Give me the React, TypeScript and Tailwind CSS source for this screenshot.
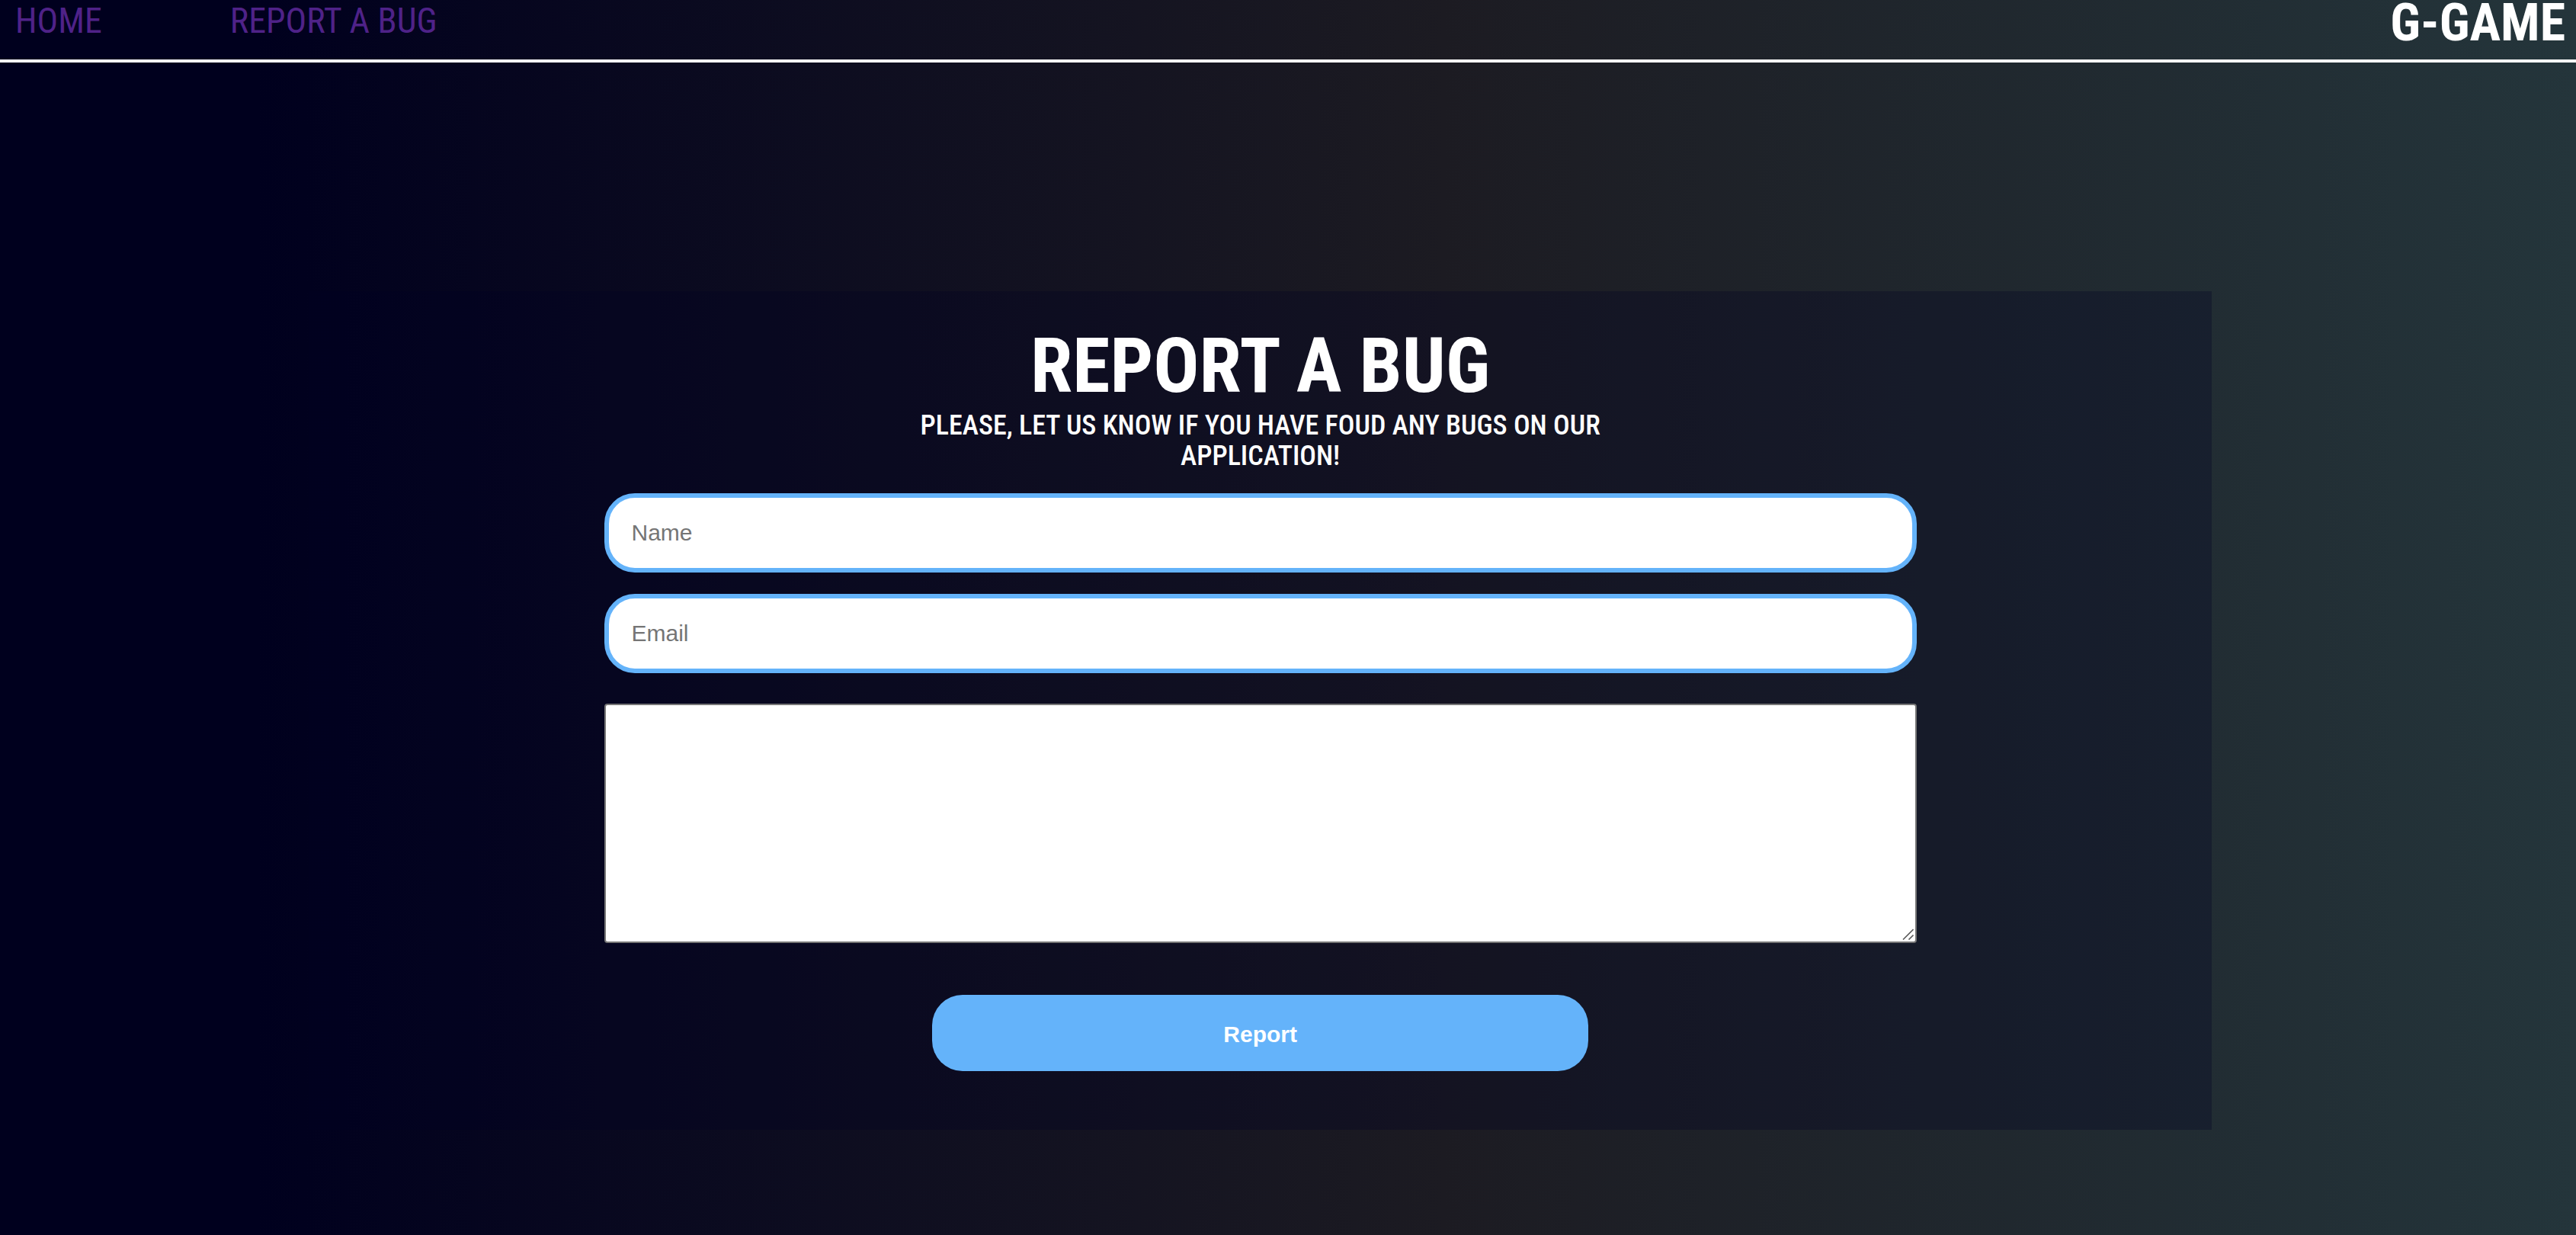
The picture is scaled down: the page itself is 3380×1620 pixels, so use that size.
const display = "font-['Roboto_Condensed','Roboto','Liberation_Sans',sans-serif]";

const fieldClass =
  "h-[104px] w-full rounded-[40px] border-6 border-[#64b3fa] bg-white px-[30px] text-[30px] text-black placeholder:text-[#757575] focus:outline-none";

function Header() {
  return (
    <header className={`${display} flex h-[82px] items-start justify-between border-b-4 border-white pl-5 pr-3.5`}>
      <nav className="flex gap-[168px] text-[46px] leading-[54px] text-[#4f2288]">
        <a href="#home">HOME</a>
        <a href="#report">REPORT A BUG</a>
      </nav>
      <span className="text-[68px] font-bold leading-[60px] text-white">G-GAME</span>
    </header>
  );
}

function ReportForm() {
  return (
    <form
      id="report"
      className="ml-[12%] mt-[300px] flex w-[73.85%] flex-col items-center bg-[#000022]/30 pb-[77px] pt-12"
      onSubmit={(e) => e.preventDefault()}
    >
      <div className={`${display} flex w-full flex-col items-center text-center text-white`}>
        <h1 className="text-[100px] font-bold leading-[100px]">REPORT A BUG</h1>
        <p className="mt-2 w-[40%] text-[36px] font-medium leading-[40px]">
          PLEASE, LET US KNOW IF YOU HAVE FOUD ANY BUGS ON OUR APPLICATION!
        </p>
      </div>

      <div className="mt-[29px] flex w-[69%] flex-col items-center">
        <input className={fieldClass} type="text" name="name" placeholder="Name" aria-label="Name" />
        <input className={`${fieldClass} mt-7`} type="email" name="email" placeholder="Email" aria-label="Email" />
        <div className="relative mt-10 flex w-full">
          <textarea
            className="h-[314px] w-full resize-y rounded-[4px] border-2 border-[#767676] bg-white p-1 text-[26px] text-black focus:outline-none [&::-webkit-resizer]:bg-transparent"
            name="message"
            aria-label="Bug description"
          />
          <svg
            className="pointer-events-none absolute bottom-1 right-1 h-4 w-4"
            viewBox="0 0 16 16"
            fill="none"
            stroke="#5c5c5c"
            strokeWidth="1.6"
            aria-hidden="true"
          >
            <path d="M2 15.5 15.5 2M9.5 15.5l6-6" />
          </svg>
        </div>
        <button
          type="submit"
          className="mt-[68px] h-[100px] w-1/2 cursor-pointer rounded-[40px] bg-[#64b3fa] pt-0.5 text-[30px] font-bold text-white"
        >
          Report
        </button>
      </div>
    </form>
  );
}

export default function App() {
  return (
    <div className="min-h-screen bg-[linear-gradient(90deg,#00001e_10%,#1c1b22_56%,#24353b_100%)] pb-10 font-['Liberation_Sans',Arial,sans-serif]">
      <Header />
      <main>
        <ReportForm />
      </main>
    </div>
  );
}
